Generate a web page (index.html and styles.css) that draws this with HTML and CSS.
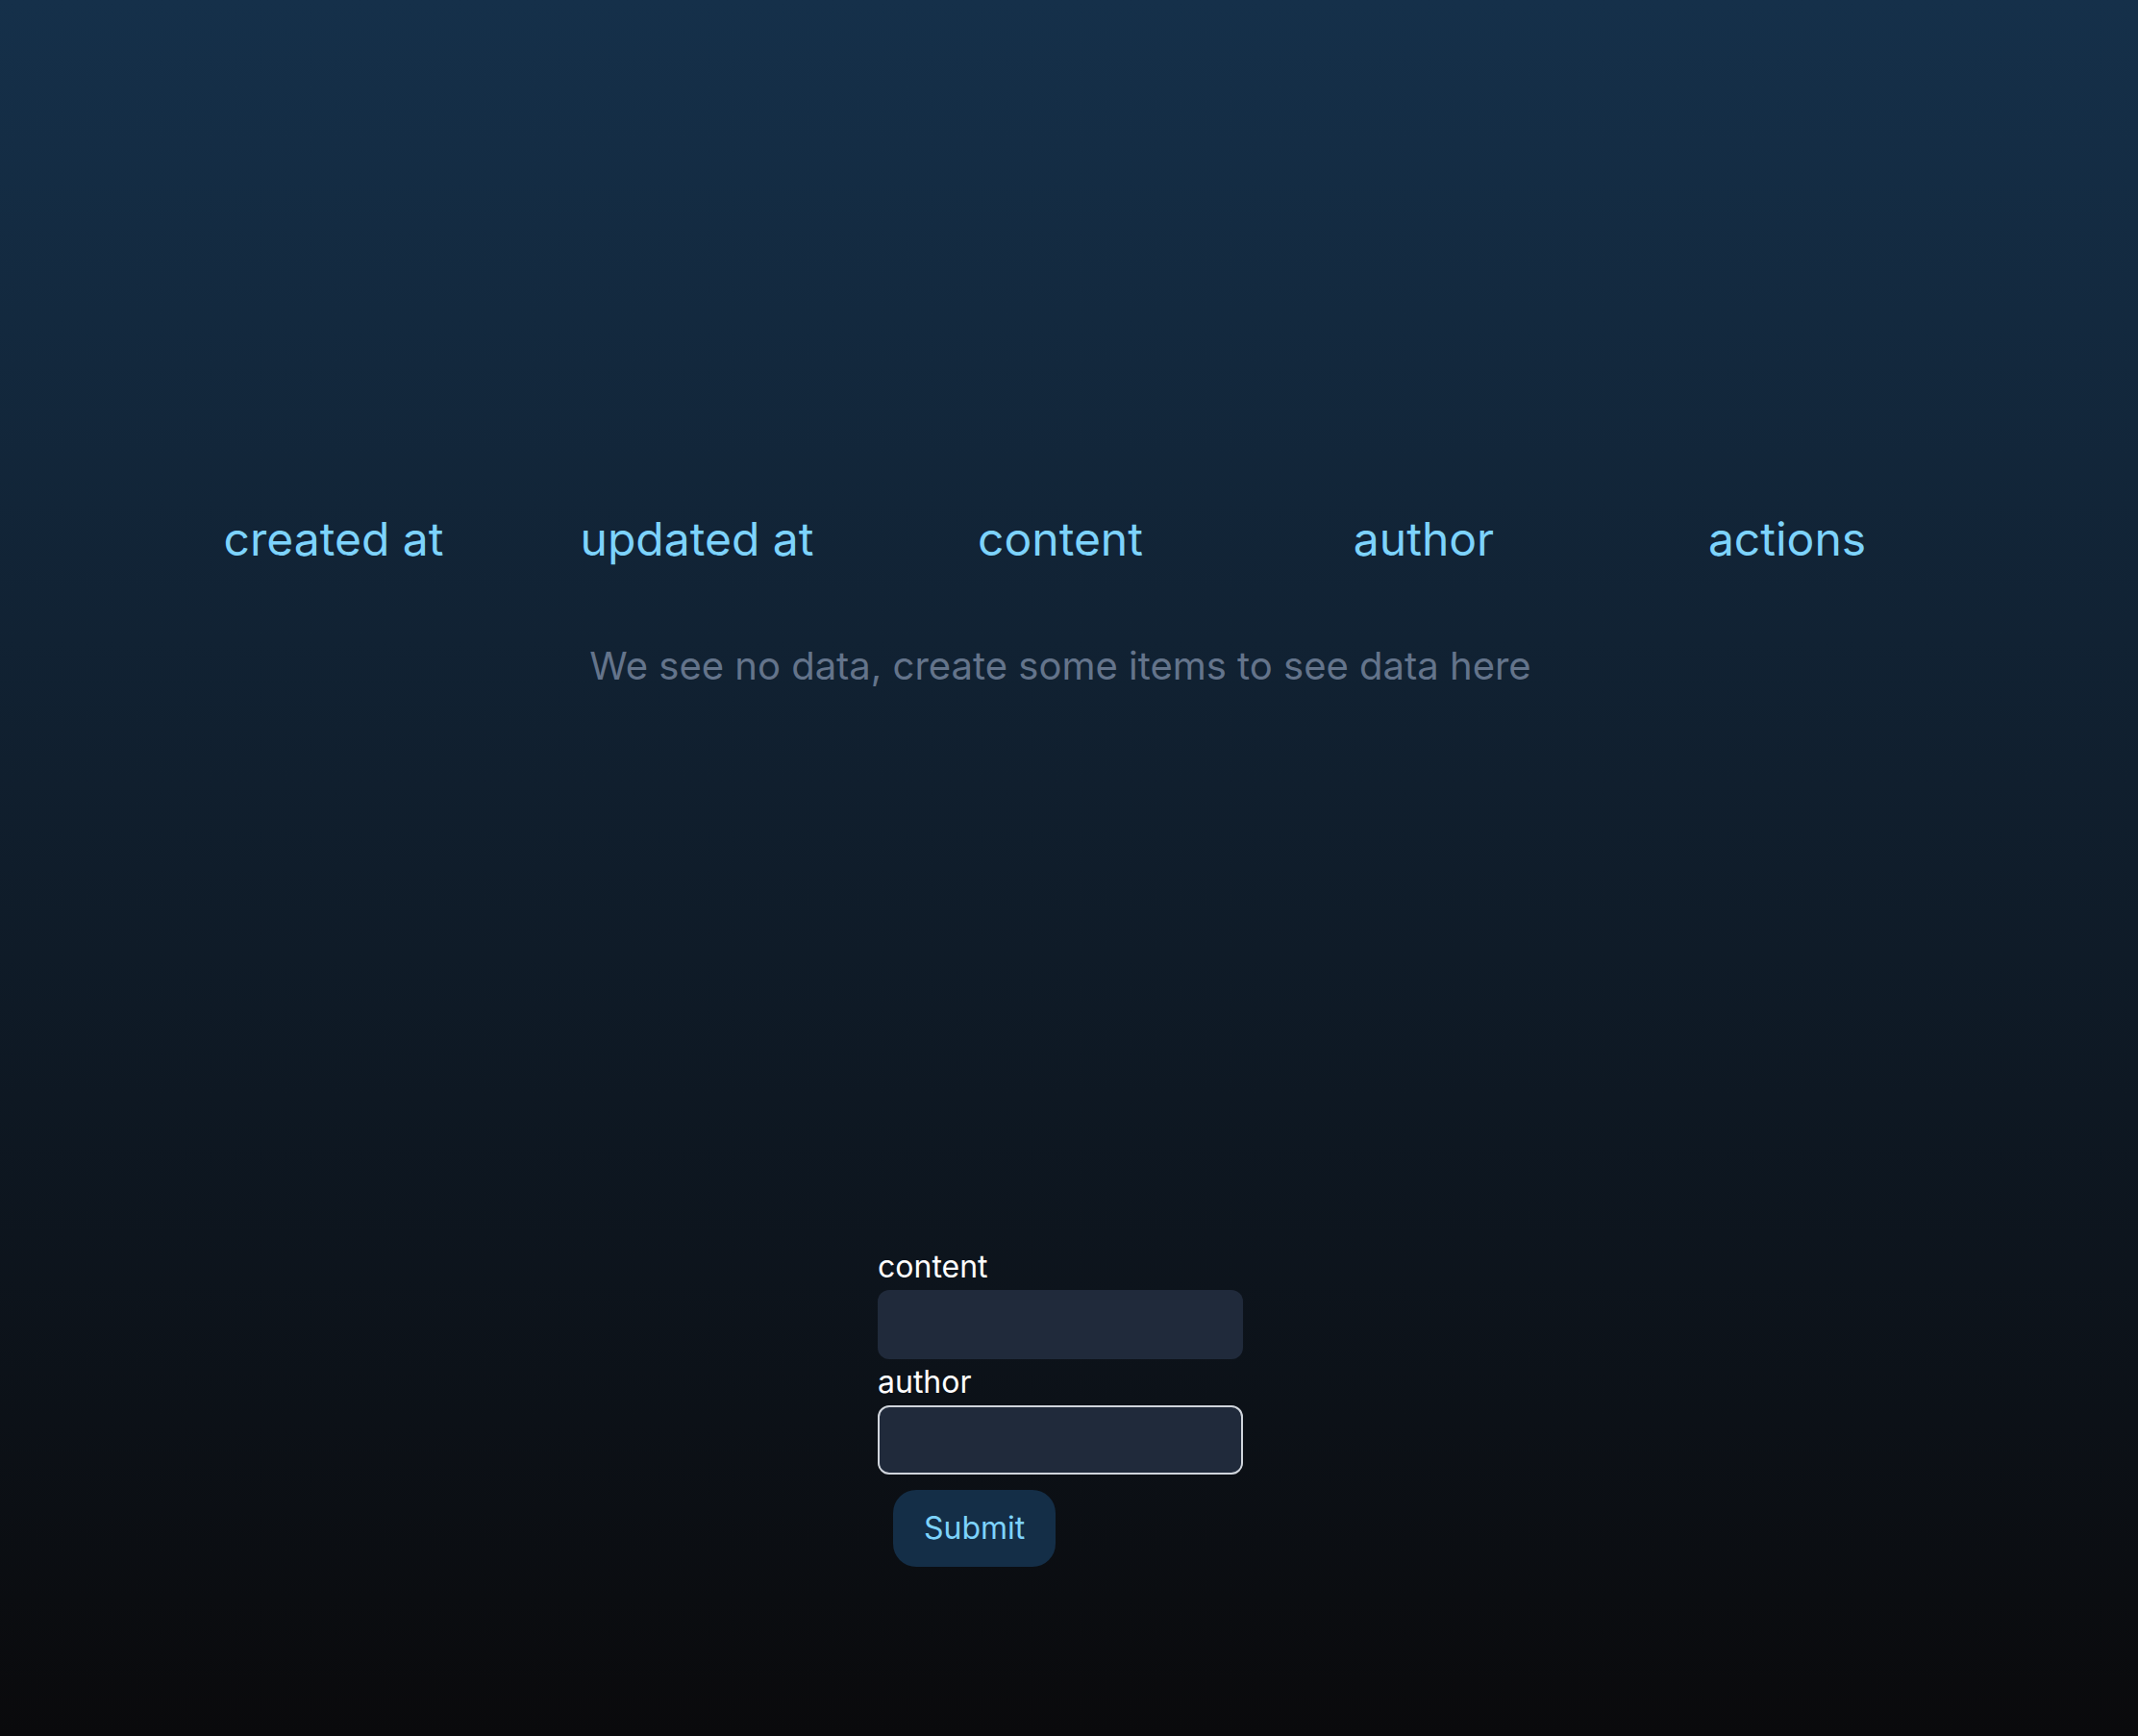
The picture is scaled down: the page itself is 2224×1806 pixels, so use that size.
FILE: index.html
```html
<!DOCTYPE html>
<html lang="en">
<head>
<meta charset="utf-8">
<title>Items</title>
<link rel="stylesheet" href="styles.css">
</head>
<body>
<main class="page">
  <section class="table">
    <div class="head-row">
      <div class="th">created at</div>
      <div class="th">updated at</div>
      <div class="th">content</div>
      <div class="th">author</div>
      <div class="th">actions</div>
    </div>
    <p class="empty">We see no data, create some items to see data here</p>
  </section>
  <form class="form">
    <label class="label" for="content">content</label>
    <input class="input" id="content" type="text">
    <label class="label" for="author">author</label>
    <input class="input input-focus" id="author" type="text">
    <button class="submit" type="button">Submit</button>
  </form>
</main>
</body>
</html>
```

FILE: styles.css
```css
html, body {
  margin: 0;
  padding: 0;
}
body {
  min-height: 1806px;
  background: linear-gradient(to bottom, #15304a 0%, #0a0a0c 100%);
  font-family: Inter, "Noto Sans", sans-serif;
}
.page {
  display: flex;
  flex-direction: column;
  align-items: center;
  padding: 525px 18px 0 0;
}
.table {
  display: flex;
  flex-direction: column;
  align-items: center;
}
.head-row {
  display: grid;
  grid-template-columns: repeat(5, 378px);
}
.th {
  text-align: center;
  font-size: 48px;
  line-height: 72px;
  color: #7dd3fc;
}
.empty {
  margin: 66px 0 0 0;
  font-size: 40px;
  line-height: 60px;
  color: #64748b;
}
.form {
  display: flex;
  flex-direction: column;
  align-items: flex-start;
  width: 380px;
  margin-top: 571px;
}
.label {
  font-size: 32px;
  line-height: 48px;
  color: #ffffff;
}
.input {
  box-sizing: border-box;
  width: 380px;
  height: 72px;
  margin: 0;
  border: 2px solid transparent;
  border-radius: 12px;
  background: #202a3b;
  outline: none;
  font: inherit;
  color: #ffffff;
}
.input-focus {
  border-color: #d0d5dc;
}
.submit {
  margin: 16px 0 0 16px;
  padding: 16px 32px;
  border: none;
  border-radius: 24px;
  background: #142e47;
  color: #7dd3fc;
  font-family: Inter, "Noto Sans", sans-serif;
  font-size: 32px;
  line-height: 48px;
}
```
